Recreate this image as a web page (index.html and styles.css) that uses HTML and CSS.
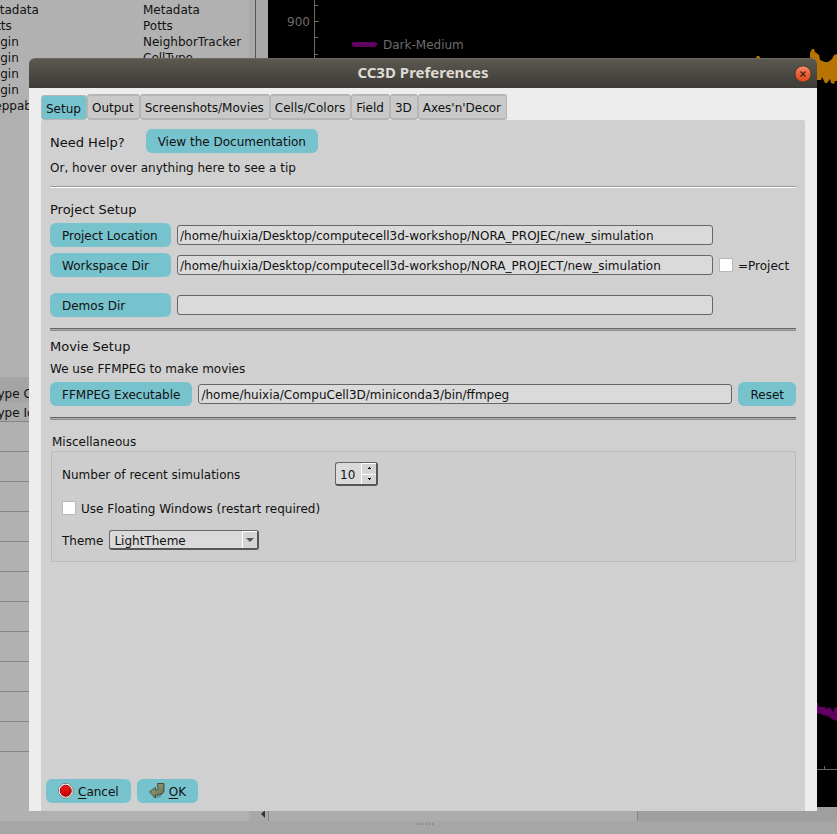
FILE: index.html
```html
<!DOCTYPE html>
<html lang="en">
<head>
<meta charset="utf-8">
<title>CC3D Preferences</title>
<link rel="stylesheet" href="styles.css">
</head>
<body>
<div class="workspace">
  <aside class="sidebar">
    <div class="model-tree">
      <div class="tree-row"><span>Metadata</span><span>Metadata</span></div>
      <div class="tree-row"><span>Potts</span><span>Potts</span></div>
      <div class="tree-row"><span>Plugin</span><span>NeighborTracker</span></div>
      <div class="tree-row"><span>Plugin</span><span>CellType</span></div>
      <div class="tree-row"><span>Plugin</span><span></span></div>
      <div class="tree-row"><span>Plugin</span><span></span></div>
      <div class="tree-row"><span>Steppable</span><span></span></div>
    </div>
    <div class="type-table">
      <div class="type-head">Type Color</div>
      <div class="type-sub">Type Id</div>
      <div class="type-row"></div><div class="type-row"></div><div class="type-row"></div>
      <div class="type-row"></div><div class="type-row"></div><div class="type-row"></div>
      <div class="type-row"></div><div class="type-row"></div><div class="type-row"></div>
      <div class="type-row"></div><div class="type-row"></div>
    </div>
  </aside>
  <div class="splitter"><div class="handle"></div><span class="scroll-arrow"></span></div>
  <main class="plot-area">
    <div class="plot">
      <svg class="plot-axis" width="240" height="70" viewBox="0 0 240 70">
        <path d="M46.500 0V70M47 5.500h3M47 21.500h4M47 37.500h3M47 54.500h3" stroke="#6c6c6c" fill="none"/>
        <text x="19" y="26" class="plot-text">900</text>
        <path d="M84 42h23l3 2-3 3H87l-3-1z" fill="#600060"/>
        <text x="115" y="49" class="plot-text">Dark-Medium</text>
      </svg>
      <svg class="plot-edge" width="100" height="807" viewBox="0 0 100 807">
        <path d="M18 60l2-4h2l3 4v4H18z" fill="#b87400"/>
        <path d="M73 64V53l2-4h2l1 3 4 3 1 5 5 2h3l4-3 2-4 3-1v27h-2l-1 3-3-1-1-4-3 4h-2l-2-4-1-2-1 3H73z" fill="#b87400"/>
        <path d="M79 703h2l1 4h6l2 2 3-2 3 5 2-5 2 1v13l-5-2-4-3-5-1-4-2-4 3-2-1z" fill="#600060"/>
        <path d="M80 769.500h20M87.500 766v3" stroke="#666" fill="none"/>
      </svg>
    </div>
    <div class="scrollbar"><div class="scroll-thumb"></div></div>
  </main>
</div>
<footer class="statusbar"><span class="grip"></span></footer>

<section class="dialog" aria-labelledby="dialog-title">
  <header class="titlebar">
    <h1 id="dialog-title">CC3D Preferences</h1>
    <button class="close" type="button" aria-label="Close">
      <svg width="18" height="18" viewBox="0 0 18 18">
        <defs><linearGradient id="red" x1="0" y1="0" x2="0" y2="1"><stop offset="0" stop-color="#f58e70"/><stop offset=".5" stop-color="#ec6035"/><stop offset="1" stop-color="#dd4814"/></linearGradient></defs>
        <circle cx="9" cy="9" r="8.200" fill="url(#red)" stroke="#393731"/>
        <path d="M6.500 6.500l5 5M11.500 6.500l-5 5" stroke="#452317" stroke-width="1.400"/>
      </svg>
    </button>
  </header>
  <div class="dialog-body">
    <nav class="tabs" role="tablist">
      <button class="tab active" role="tab" aria-selected="true">Setup</button>
      <button class="tab" role="tab">Output</button>
      <button class="tab" role="tab">Screenshots/Movies</button>
      <button class="tab" role="tab">Cells/Colors</button>
      <button class="tab" role="tab">Field</button>
      <button class="tab" role="tab">3D</button>
      <button class="tab" role="tab">Axes'n'Decor</button>
    </nav>
    <form class="panel">
      <div class="help">
        <h2>Need Help?</h2>
        <button class="btn" type="button">View the Documentation</button>
      </div>
      <p class="tip">Or, hover over anything here to see a tip</p>
      <hr class="rule light">
      <h2 class="project-title">Project Setup</h2>
      <div class="project-grid">
        <button class="btn" type="button">Project Location</button>
        <input class="field" type="text" aria-label="Project Location" value="/home/huixia/Desktop/computecell3d-workshop/NORA_PROJEC/new_simulation">
        <span></span>
        <button class="btn" type="button">Workspace Dir</button>
        <input class="field" type="text" aria-label="Workspace Dir" value="/home/huixia/Desktop/computecell3d-workshop/NORA_PROJECT/new_simulation">
        <label class="check"><input type="checkbox"><span>=Project</span></label>
      </div>
      <div class="project-grid demos">
        <button class="btn" type="button">Demos Dir</button>
        <input class="field" type="text" aria-label="Demos Dir">
        <span></span>
      </div>
      <hr class="rule dark">
      <h2 class="movie-title">Movie Setup</h2>
      <p class="movie-note">We use FFMPEG to make movies</p>
      <div class="ffmpeg">
        <button class="btn" type="button">FFMPEG Executable</button>
        <input class="field" type="text" aria-label="FFMPEG Executable" value="/home/huixia/CompuCell3D/miniconda3/bin/ffmpeg">
        <button class="btn" type="button">Reset</button>
      </div>
      <hr class="rule dark">
      <fieldset class="misc">
        <legend>Miscellaneous</legend>
        <div class="misc-box">
          <div class="recent">
            <label for="recent">Number of recent simulations</label>
            <span class="spin">
              <input id="recent" type="number" value="10">
              <span class="steps">
                <button type="button" aria-label="Increase"><svg width="5" height="3"><path d="M2 0h1v1h1v1H1V1h1z"/></svg></button>
                <button type="button" aria-label="Decrease"><svg width="5" height="3"><path d="M1 0h3v1H3v1H2V1H1z"/></svg></button>
              </span>
            </span>
          </div>
          <label class="check"><input type="checkbox"><span>Use Floating Windows (restart required)</span></label>
          <div class="theme">
            <label for="theme">Theme</label>
            <span class="select"><select id="theme"><option>LightTheme</option></select><span class="drop"></span></span>
          </div>
        </div>
      </fieldset>
      <div class="actions">
        <button class="btn" type="button">
          <svg width="16" height="16" viewBox="0 0 16 16">
            <defs><linearGradient id="stop" x1="0" y1="0" x2="0" y2="1"><stop offset="0" stop-color="#f02020"/><stop offset="1" stop-color="#c00000"/></linearGradient></defs>
            <path d="M5 .5h5.500L15 5v5.500L10.500 15H5L.5 10.500V5z" fill="#eeeeec" stroke="#888a85"/>
            <circle cx="7.750" cy="7.750" r="5.500" fill="url(#stop)" stroke="#a00000"/>
          </svg>
          <span><u>C</u>ancel</span>
        </button>
        <button class="btn" type="button">
          <svg width="16" height="16" viewBox="0 0 16 16">
            <defs><linearGradient id="enter" x1="0" y1="0" x2="1" y2="1"><stop offset="0" stop-color="#a3ab86"/><stop offset="1" stop-color="#606849"/></linearGradient></defs>
            <path d="M3 14q5 3 10-1l-3-1z" fill="#4f8790" opacity=".6"/>
            <path d="M8.500 .5h6.500v7.500q-1 3.500-5 4H6.500v2.800L.5 9l6-4.500v2.800h1.500q1-.3 1-1.500z" fill="url(#enter)" stroke="#474d35"/>
          </svg>
          <span><u>O</u>K</span>
        </button>
      </div>
    </form>
  </div>
</section>
</body>
</html>
```

FILE: styles.css
```css
* { box-sizing: border-box; }
html, body { height: 100%; margin: 0; }
body {
  display: flex;
  flex-direction: column;
  overflow: hidden;
  position: relative;
  background: #a6a6a6;
  color: #111;
  font: 12px/16px "DejaVu Sans", sans-serif;
}
button, input, select { font: inherit; color: inherit; margin: 0; }
h1, h2, p, hr, fieldset { margin: 0; padding: 0; border: 0; }

/* Main window behind the dialog */
.workspace { flex: 1; display: flex; min-height: 0; }
.sidebar {
  width: 249px;
  overflow: hidden;
  background: #b1b1b1;
  display: flex;
  flex-direction: column;
}
.model-tree { height: 377px; padding-top: 2px; }
.tree-row { display: grid; grid-template-columns: 161px 1fr; margin-left: -18px; height: 16px; }
.type-table { flex: 1; white-space: nowrap; }
.type-head { height: 25px; padding-top: 9px; background: #a4a4a4; text-indent: -8px; }
.type-sub { height: 20px; padding-top: 3px; background: #aaa; text-indent: -8px; border-bottom: 1px solid #858585; }
.type-row { height: 30px; border-bottom: 1px solid #858585; }
.splitter {
  width: 19px;
  background: #a8a8a8;
  display: flex;
  flex-direction: column;
  align-items: center;
  padding-bottom: 3px;
}
.handle { flex: 1; width: 100%; margin-bottom: 3px; background: linear-gradient(90deg, transparent 6px, #555 6px, #555 7px, transparent 7px); }
.scroll-arrow { margin-left: 8px; border: 4px solid transparent; border-right-color: #333; border-left: 0; }
.plot-area { flex: 1; display: flex; flex-direction: column; min-width: 0; }
.plot { flex: 1; min-height: 0; background: #000; display: flex; justify-content: space-between; overflow: hidden; }
.plot-axis, .plot-edge { flex: none; }
.plot-text { font-size: 12px; fill: #6c6c6c; }
.scrollbar { height: 14px; background: #9f9f9f; border-left: 1px solid #858585; }
.scroll-thumb { width: 65%; height: 100%; background: #acacac; border-right: 1px solid #858585; }
.statusbar { height: 13px; display: flex; justify-content: center; }
.grip { width: 17px; height: 2px; margin: 2px 0 0 14px; background: repeating-linear-gradient(90deg, #808080 0 1px, transparent 1px 3px); }

/* Preferences dialog */
.dialog {
  position: absolute;
  inset: 58px 20px 23px 29px;
  display: flex;
  flex-direction: column;
}
.titlebar {
  height: 30px;
  display: grid;
  grid-template-columns: 28px 1fr 28px;
  align-items: center;
  border-radius: 6px 6px 0 0;
  border-top: 1px solid #6b685e;
  background: linear-gradient(#5b584f, #3c3b37);
}
.titlebar h1 {
  grid-column: 2;
  padding-bottom: 4px;
  text-align: center;
  color: #dfdbd2;
  font: bold 15px/20px "Noto Sans", sans-serif;
}
.close { width: 18px; height: 18px; padding: 0; border: 0; background: none; justify-self: center; }
.close svg { display: block; }
.dialog-body { flex: 1; display: flex; flex-direction: column; padding: 6px 12px 0; background: #ededed; }
.tabs { display: flex; align-items: flex-end; height: 26px; }
.tab {
  height: 26px;
  padding: 1px 5px 0 4px;
  border: 2px solid #b5b5b5;
  border-left-width: 1px;
  border-right-width: 1px;
  border-radius: 3px;
  background: #c9c9c9;
}
.tab.active { height: 25px; padding-top: 2px; border-width: 1px; background: #76c2cd; }
.panel {
  flex: 1;
  display: flex;
  flex-direction: column;
  padding: 9px 9px 8px;
  background: #d0d0d0;
  border-radius: 2px 2px 0 0;
}
h2 { font-size: 13px; line-height: 16px; font-weight: normal; }
.btn {
  height: 24px;
  padding: 2px 12px 0;
  border: 0;
  border-radius: 6px;
  background: #76c2cd;
  text-align: left;
  white-space: nowrap;
}
.help { display: flex; align-items: center; gap: 21px; }
.help h2 { padding-top: 3px; }
.tip { margin-top: 7px; }
.rule { flex: none; }
.rule.light { height: 2px; margin-top: 10px; background: linear-gradient(#999 50%, #fff 50%); }
.rule.dark { height: 3px; margin-top: 11px; border-top: 1px solid #666; border-bottom: 1px solid #8c8c8c; background: #aaa; }
.project-title { margin-top: 14px; }
.project-grid {
  display: grid;
  grid-template-columns: 121px 1fr 77px;
  gap: 6px;
  align-items: center;
  margin-top: 5px;
}
.project-grid.demos { margin-top: 16px; }
.field {
  height: 20px;
  min-width: 0;
  padding: 2px 2px 0;
  border: 1px solid #666;
  border-radius: 3px;
  background: #dadada;
}
.check { display: flex; align-items: center; gap: 5px; height: 16px; white-space: nowrap; }
.check input { appearance: none; width: 14px; height: 14px; border: 1px solid #b9b9b9; background: #fff; }
.check span, .recent label, .theme label { padding-top: 2px; }
.movie-title { margin-top: 8px; }
.movie-note { margin-top: 6px; }
.ffmpeg { display: flex; align-items: center; gap: 6px; margin-top: 5px; }
.ffmpeg .field { flex: 1; }
.misc { margin-top: 14px; padding-left: 1px; }
.misc legend { padding: 0 1px; }
.misc-box {
  display: flex;
  flex-direction: column;
  gap: 14px;
  margin-top: 1px;
  padding: 10px 10px 11px;
  border: 1px solid #bababa;
  border-radius: 2px;
  background: #cdcdcd;
}
.recent { display: grid; grid-template-columns: 267px auto 1fr; gap: 6px; align-items: center; }
.spin, .select {
  display: flex;
  border: 1px solid #666;
  border-right: 2px solid #555;
  border-bottom: 2px solid #555;
  border-radius: 3px;
  background: #dadada;
}
.spin { width: 43px; height: 24px; }
.spin input { appearance: textfield; width: 25px; padding: 2px 0 0 4px; border: 0; background: none; }
.spin input::-webkit-inner-spin-button { appearance: none; }
.steps { flex: 1; display: flex; flex-direction: column; }
.steps button {
  flex: 1;
  display: grid;
  place-items: center;
  padding: 0;
  border: 0 solid #fff;
  border-width: 1px 0 0 1px;
  background: #d4d4d4;
}
.theme { display: flex; align-items: center; gap: 6px; }
.select { width: 150px; height: 20px; }
.select select { appearance: none; flex: 1; min-width: 0; padding: 2px 0 0 4px; border: 0; background: none; }
.drop { width: 15px; border: 0 solid #fff; border-width: 1px 0 0 1px; background: #d4d4d4; display: grid; place-items: center; }
.drop::after { content: ""; border: 4px solid transparent; border-top-color: #555; border-bottom: 0; }
.actions { display: flex; gap: 6px; margin: auto 0 0 -4px; }
.actions .btn { display: flex; align-items: center; gap: 4px; padding-top: 0; }
.actions span { padding-top: 2px; }
.actions u { text-underline-offset: 2px; }
```
